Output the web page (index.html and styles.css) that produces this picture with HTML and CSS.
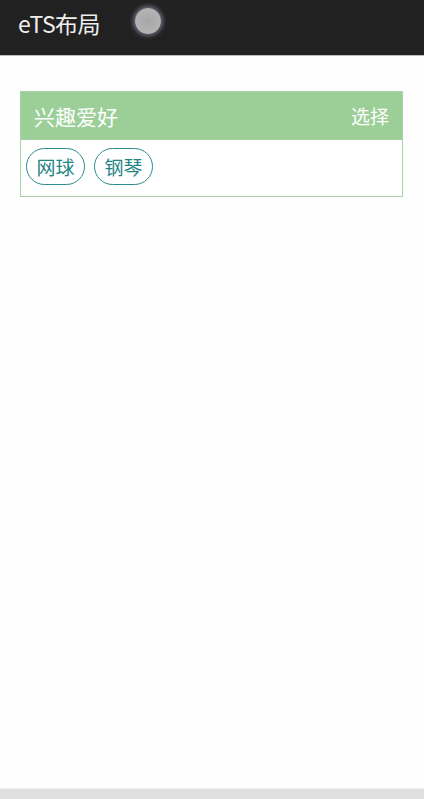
FILE: index.html
```html
<!DOCTYPE html>
<html lang="zh-CN">
<head>
    <meta charset="UTF-8">
    <meta name="viewport" content="width=device-width, initial-scale=1.0">
    <title>eTS布局</title>
    <link rel="stylesheet" href="styles.css">
</head>
<body>
    <header class="app-bar">
        <h1>eTS布局</h1>
        <span class="touch-dot"></span>
    </header>

    <main class="content">
        <section class="card">
            <div class="card-head">
                <span class="card-title">兴趣爱好</span>
                <span class="card-action">选择</span>
            </div>
            <div class="card-body">
                <span class="tag">网球</span>
                <span class="tag">钢琴</span>
            </div>
        </section>
    </main>

    <footer class="nav-strip"></footer>
</body>
</html>
```

FILE: styles.css
```css
body {
    margin: 0;
    height: 799px;
    display: flex;
    flex-direction: column;
    background: #fefefe;
    font-family: "Noto Sans CJK SC", "Noto Sans", sans-serif;
}

.app-bar {
    height: 55px;
    background: #212121;
    border-bottom: 1px solid #bcbcbc;
    display: flex;
    align-items: center;
    padding-left: 18px;
    position: relative;
}

.app-bar h1 {
    margin: 0 0 10px 0;
    font-size: 23px;
    font-weight: 400;
    color: #eeeeee;
    letter-spacing: -0.5px;
}

/* indicador de toque */
.touch-dot {
    position: absolute;
    left: 135px;
    top: 8px;
    width: 26px;
    height: 26px;
    border-radius: 50%;
    background: radial-gradient(circle, #a6a6a6 0%, #b4b4b4 70%, #c8c8d0 100%);
    box-shadow: 0 0 4px 2px rgba(170, 170, 210, 0.55);
}

.content {
    flex: 1;
    padding: 35px 21px 0 20px;
}

.card {
    border: 1px solid #a6d4a6;
}

.card-head {
    height: 47px;
    background: #9ccf97;
    display: flex;
    align-items: center;
    justify-content: space-between;
    padding: 0 13px 0 13px;
    color: #ffffff;
}

.card-title {
    font-size: 21px;
}

.card-action {
    font-size: 19px;
}

.card-body {
    display: flex;
    gap: 9px;
    padding: 8px 5px 11px 5px;
    background: #ffffff;
    border-top: 1px solid #a6d4a6;
}

.tag {
    border: 1.5px solid #2b8c8c;
    border-radius: 19px;
    padding: 0 9.5px;
    height: 35px;
    display: flex;
    align-items: center;
    font-size: 19px;
    color: #1f8585;
}

.nav-strip {
    height: 10px;
    background: #e0e0e0;
    border-top: 1px solid #eef4ee;
}
```
